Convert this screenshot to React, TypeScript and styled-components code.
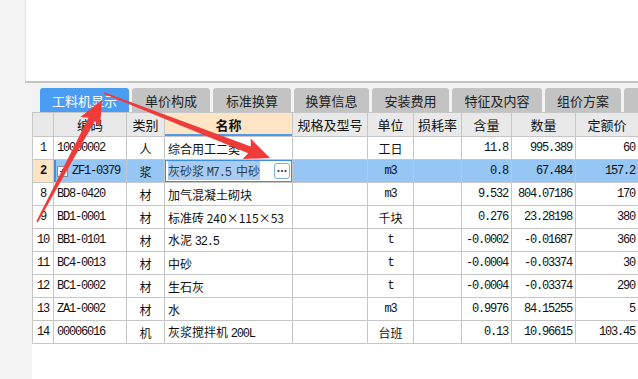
import React from 'react';
import styled, { createGlobalStyle } from 'styled-components';

const GlobalStyle = createGlobalStyle`
  html, body { margin: 0; padding: 0; background: #fff; }
  body { font-family: "Noto Sans CJK SC", "Liberation Sans", sans-serif; }
`;

const COLS = '21px 73px 38px 128px 75px 46px 48px 50px 64px 63px';
const LINE = '#c6c6c6';

type Row = {
	no: string;
	code: string;
	type: string;
	name: React.ReactNode;
	unit: string;
	qty: string;
	amount: string;
	price: string;
	selected?: boolean;
};

const tabs = [
	{ label: '工料机显示', width: 89, active: true },
	{ label: '单价构成', width: 78 },
	{ label: '标准换算', width: 78 },
	{ label: '换算信息', width: 75 },
	{ label: '安装费用', width: 77 },
	{ label: '特征及内容', width: 90 },
	{ label: '组价方案', width: 76 },
	{ label: '', width: 76 },
];

const headers = ['', '编码', '类别', '名称', '规格及型号', '单位', '损耗率', '含量', '数量', '定额价'];

const App = () => {
	const rows: Row[] = [
		{ no: '1', code: '10000002', type: '人', name: '综合用工二类', unit: '工日', qty: '11.8', amount: '995.389', price: '60' },
		{
			no: '2',
			code: 'ZF1-0379',
			type: '浆',
			name: (
				<Highlight>
					灰砂浆 <Mono>M7.5</Mono>&nbsp; 中砂
				</Highlight>
			),
			unit: 'm3',
			qty: '0.8',
			amount: '67.484',
			price: '157.2',
			selected: true,
		},
		{ no: '8', code: 'BD8-0420', type: '材', name: '加气混凝土砌块', unit: 'm3', qty: '9.532', amount: '804.07186', price: '170' },
		{ no: '9', code: 'BD1-0001', type: '材', name: '标准砖 240×115×53', unit: '千块', qty: '0.276', amount: '23.28198', price: '380' },
		{ no: '10', code: 'BB1-0101', type: '材', name: <>水泥 <Mono>32.5</Mono></>, unit: 't', qty: '-0.0002', amount: '-0.01687', price: '360' },
		{ no: '11', code: 'BC4-0013', type: '材', name: '中砂', unit: 't', qty: '-0.0004', amount: '-0.03374', price: '30' },
		{ no: '12', code: 'BC1-0002', type: '材', name: '生石灰', unit: 't', qty: '-0.0004', amount: '-0.03374', price: '290' },
		{ no: '13', code: 'ZA1-0002', type: '材', name: '水', unit: 'm3', qty: '0.9976', amount: '84.15255', price: '5' },
		{ no: '14', code: '00006016', type: '机', name: <>灰浆搅拌机 <Mono>200L</Mono></>, unit: '台班', qty: '0.13', amount: '10.96615', price: '103.45' },
	];

	const unitText = (u: string) => (/^[a-z0-9]+$/.test(u) ? <Mono>{u}</Mono> : u);

	return (
		<>
			<GlobalStyle />
			<Page>
				<LeftStrip />
				<Main>
					<TopArea />
					<Divider />
					<Panel>
						<TabBar>
							{tabs.map((t, i) => (
								<Tab key={i} $width={t.width} $active={!!t.active}>
									{t.label}
								</Tab>
							))}
						</TabBar>
						<TableArea>
							<Grid>
								<HeaderRow>
									{headers.map((h, i) => (
										<HeadCell key={i} $focus={h === '名称'}>
											{h}
										</HeadCell>
									))}
								</HeaderRow>
								{rows.map((r) => (
									<BodyRow key={r.no} $selected={!!r.selected}>
										<NoCell $selected={!!r.selected}>
											<Mono>{r.no}</Mono>
										</NoCell>
										<CodeCell $selected={!!r.selected}>
											{r.selected && <PlusBox />}
											<Mono>{r.code}</Mono>
										</CodeCell>
										<Cell $align='center'>{r.type}</Cell>
										<NameCell $editing={!!r.selected}>
											<NameText>{r.name}</NameText>
											{r.selected && (
												<MoreButton>
													<svg width='10' height='4' viewBox='0 0 10 4'>
														<circle cx='1.5' cy='2' r='1.1' fill='#333' />
														<circle cx='5' cy='2' r='1.1' fill='#333' />
														<circle cx='8.5' cy='2' r='1.1' fill='#333' />
													</svg>
												</MoreButton>
											)}
										</NameCell>
										<Cell />
										<Cell $align='center'>{unitText(r.unit)}</Cell>
										<Cell />
										<Cell $align='right'>
											<Mono>{r.qty}</Mono>
										</Cell>
										<Cell $align='right'>
											<Mono>{r.amount}</Mono>
										</Cell>
										<Cell $align='right'>
											<Mono>{r.price}</Mono>
										</Cell>
									</BodyRow>
								))}
							</Grid>
						</TableArea>
					</Panel>
				</Main>
				<Overlay width='638' height='379' viewBox='0 0 638 379'>
					<polygon points={arrow(37, 222, 102, 100)} fill='#f03b3b' />
					<polygon points={arrow(104, 93, 270, 158)} fill='#f03b3b' />
				</Overlay>
			</Page>
		</>
	);
};

// tapered annotation arrow, tail -> tip
function arrow(x1: number, y1: number, x2: number, y2: number) {
	const dx = x2 - x1;
	const dy = y2 - y1;
	const len = Math.hypot(dx, dy);
	const ux = dx / len;
	const uy = dy / len;
	const px = -uy;
	const py = ux;
	const headLen = 25;
	const headW = 11;
	const shaftW = 3.6;
	const tailW = 0.8;
	const bx = x2 - ux * headLen;
	const by = y2 - uy * headLen;
	const pts = [
		[x1 + px * tailW, y1 + py * tailW],
		[bx + ux * 3 + px * shaftW, by + uy * 3 + py * shaftW],
		[bx + px * headW, by + py * headW],
		[x2, y2],
		[bx - px * headW, by - py * headW],
		[bx + ux * 3 - px * shaftW, by + uy * 3 - py * shaftW],
		[x1 - px * tailW, y1 - py * tailW],
	];
	return pts.map((p) => `${p[0].toFixed(1)},${p[1].toFixed(1)}`).join(' ');
}

const Page = styled.div`
	position: relative;
	width: 638px;
	height: 379px;
	display: flex;
	overflow: hidden;
	background: #f3f3f3;
`;

const LeftStrip = styled.div`
	width: 25px;
	flex: none;
	background: #f3f3f3;
`;

const Main = styled.div`
	flex: 1;
	min-width: 0;
	display: flex;
	flex-direction: column;
`;

const TopArea = styled.div`
	height: 81px;
	flex: none;
	background: #fff;
	border-left: 1px solid #e2e2e2;
`;

const Divider = styled.div`
	height: 2px;
	flex: none;
	background: #c4c4c4;
`;

const Panel = styled.div`
	flex: 1;
	min-height: 0;
	display: flex;
	flex-direction: column;
	padding-left: 7px;
	background: #f3f3f3;
`;

const TabBar = styled.div`
	height: 29px;
	flex: none;
	box-sizing: border-box;
	padding: 5px 0 0 8px;
	display: flex;
	gap: 3px;
	overflow: hidden;
`;

const Tab = styled.div<{ $width: number; $active: boolean }>`
	width: ${(p) => p.$width}px;
	flex: none;
	height: 24px;
	border-radius: 3px 3px 0 0;
	display: flex;
	align-items: center;
	justify-content: center;
	white-space: nowrap;
	font-size: 13px;
	color: ${(p) => (p.$active ? '#fff' : '#222')};
	background: ${(p) => (p.$active ? '#4a9df2' : '#c3c3c3')};
`;

const TableArea = styled.div`
	flex: 1;
	min-height: 0;
	background: #fff;
	overflow: hidden;
`;

const Grid = styled.div`
	width: max-content;
	border-top: 1px solid ${LINE};
	border-left: 1px solid ${LINE};
`;

const HeaderRow = styled.div`
	display: grid;
	grid-template-columns: ${COLS};
	height: 24px;
	background: #e9e9e9;
`;

const BodyRow = styled.div<{ $selected: boolean }>`
	display: grid;
	grid-template-columns: ${COLS};
	height: 23px;
	background: ${(p) => (p.$selected ? '#95c6f4' : '#fff')};
`;

const Cell = styled.div<{ $align?: 'left' | 'center' | 'right' }>`
	box-sizing: border-box;
	min-width: 0;
	display: flex;
	align-items: center;
	justify-content: ${(p) => (p.$align === 'center' ? 'center' : p.$align === 'right' ? 'flex-end' : 'flex-start')};
	padding: 0 3px;
	border-right: 1px solid ${LINE};
	border-bottom: 1px solid ${LINE};
	white-space: nowrap;
	overflow: hidden;
	font-size: 12px;
	color: #111;
`;

const HeadCell = styled(Cell)<{ $focus: boolean }>`
	justify-content: center;
	font-size: 13px;
	font-weight: ${(p) => (p.$focus ? 700 : 400)};
	background: ${(p) => (p.$focus ? '#fde5c6' : 'transparent')};
	box-shadow: ${(p) => (p.$focus ? 'inset 0 -2px 0 #4d9be8' : 'none')};
`;

const NoCell = styled(Cell)<{ $selected: boolean }>`
	justify-content: center;
	padding: 0;
	background: ${(p) => (p.$selected ? '#fde4c4' : '#fff')};
	font-weight: ${(p) => (p.$selected ? 700 : 400)};
`;

const CodeCell = styled(Cell)<{ $selected: boolean }>`
	box-shadow: ${(p) => (p.$selected ? 'inset 2px 0 0 #3d8fe8' : 'none')};
`;

const NameCell = styled(Cell)<{ $editing: boolean }>`
	background: ${(p) => (p.$editing ? '#fff' : 'transparent')};
	box-shadow: ${(p) => (p.$editing ? 'inset 0 0 0 1px #3b8ee6' : 'none')};
	padding-right: 2px;
`;

const NameText = styled.span`
	white-space: pre;
`;

const Mono = styled.span`
	font-family: 'Liberation Mono', monospace;
	font-size: 12px;
	letter-spacing: -1.2px;
`;

const Highlight = styled.span`
	background: #a9cdf2;
	color: #2c3d50;
	line-height: 15px;
	padding: 1px 0;
`;

const PlusBox = styled.span`
	position: relative;
	width: 11px;
	height: 11px;
	flex: none;
	margin-right: 4px;
	box-sizing: border-box;
	border: 1px solid #888;
	background: #fff;

	&::before,
	&::after {
		content: '';
		position: absolute;
		background: #222;
	}
	&::before {
		left: 2px;
		right: 2px;
		top: 4px;
		height: 1px;
	}
	&::after {
		top: 2px;
		bottom: 2px;
		left: 4px;
		width: 1px;
	}
`;

const MoreButton = styled.span`
	margin-left: auto;
	width: 16px;
	height: 16px;
	flex: none;
	box-sizing: border-box;
	border: 1px solid #7eaee0;
	border-radius: 3px;
	background: #fff;
	display: flex;
	align-items: center;
	justify-content: center;
`;

const Overlay = styled.svg`
	position: absolute;
	left: 0;
	top: 0;
	pointer-events: none;
`;

export default App;
